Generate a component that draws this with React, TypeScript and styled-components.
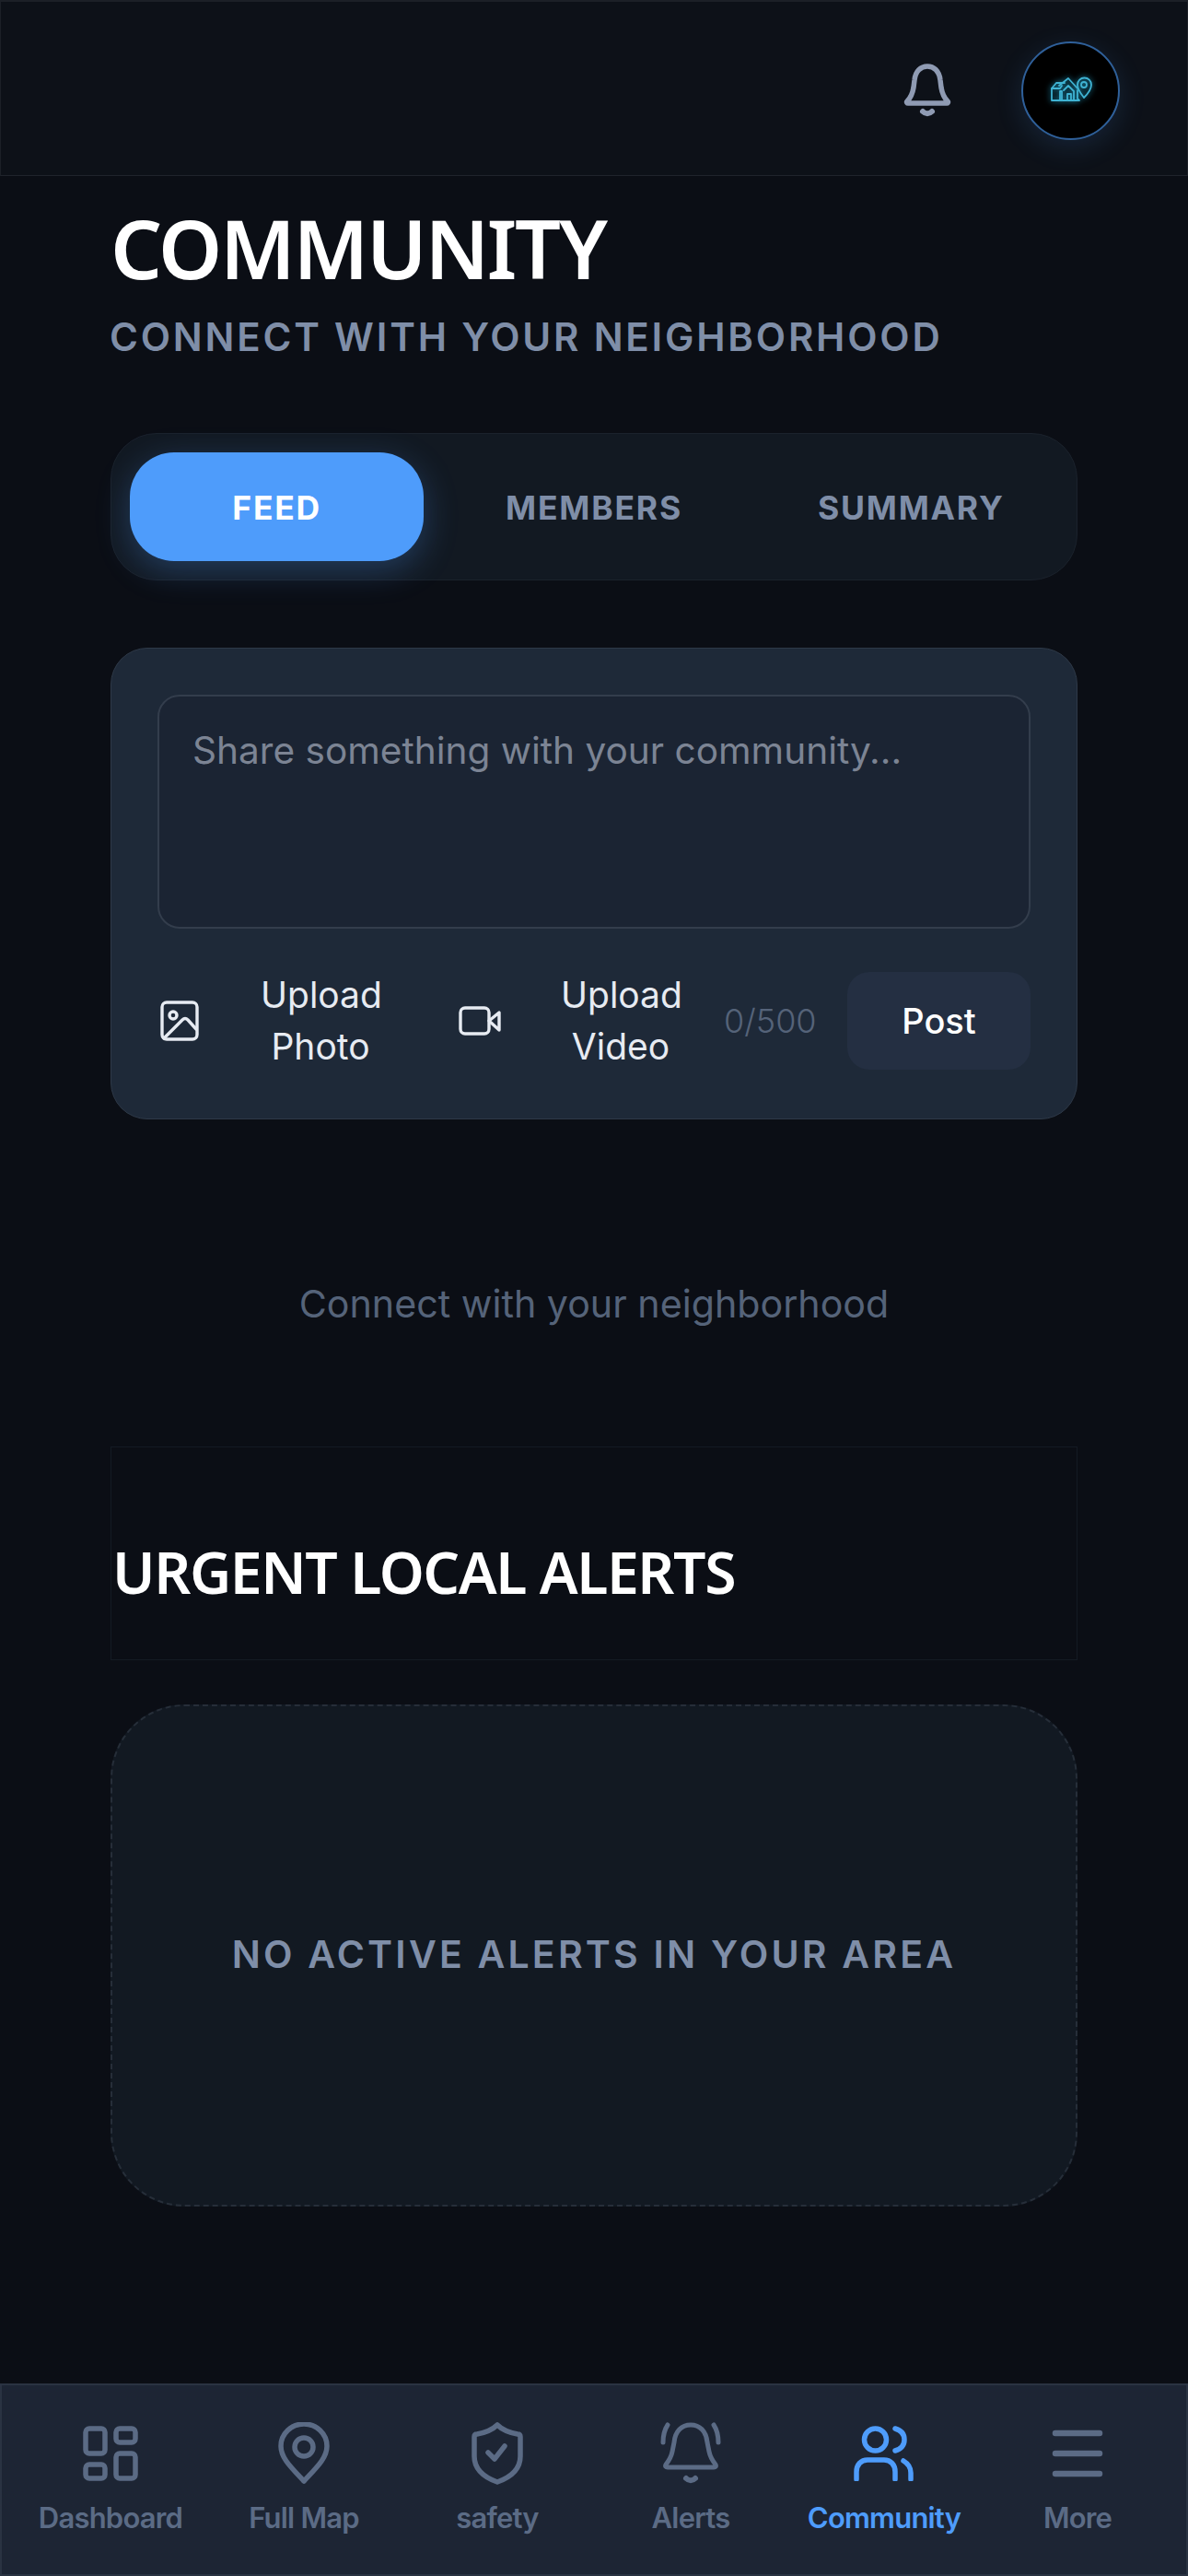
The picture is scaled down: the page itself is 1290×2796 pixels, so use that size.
import React from 'react'
import styled, { createGlobalStyle } from 'styled-components'

const GlobalStyle = createGlobalStyle`
  html, body { margin: 0; padding: 0; background: #0b0e15; }
  * { box-sizing: border-box; }
`

const Page = styled.div`
  width: 1290px;
  height: 2796px;
  display: flex;
  flex-direction: column;
  background: #0b0e15;
  font-family: Inter, "Noto Sans", sans-serif;
  overflow: hidden;
`

const Header = styled.header`
  height: 191px;
  flex-shrink: 0;
  display: flex;
  align-items: center;
  justify-content: flex-end;
  padding: 4px 73px 0 0;
  gap: 72px;
  background: #0d1118;
  border-top: 2px solid #1c2027;
  border-bottom: 1px solid #1f242c;
  border-left: 1px solid #1c2027;
  border-right: 1px solid #1c2027;
`

const BellButton = styled.div`
  width: 60px;
  height: 60px;
  display: flex;
  align-items: center;
  justify-content: center;
`

const Avatar = styled.div`
  width: 107px;
  height: 107px;
  border-radius: 50%;
  background: #000;
  border: 2px solid #2f609a;
  box-shadow: 0 8px 30px rgba(77, 156, 250, 0.14);
  display: flex;
  align-items: center;
  justify-content: center;
`

const Main = styled.main`
  flex: 1;
  padding: 0 120px;
  display: flex;
  flex-direction: column;
`

const Title = styled.h1`
  margin: 28px 0 0;
  font-family: "Noto Sans", sans-serif;
  font-size: 88px;
  line-height: 100px;
  font-weight: 600;
  letter-spacing: -2.3px;
  color: #fff;
`

const Subtitle = styled.div`
  margin-top: 19px;
  margin-left: -1px;
  font-size: 42px;
  line-height: 56px;
  font-weight: 600;
  letter-spacing: 2.8px;
  color: #7f8ea8;
  white-space: nowrap;
`

const Tabs = styled.div`
  margin-top: 76px;
  height: 160px;
  padding: 20px;
  display: grid;
  grid-template-columns: repeat(3, 1fr);
  gap: 25px;
  border-radius: 50px;
  background: #121922;
  border: 1px solid #1b222c;
`

const Tab = styled.div<{ $active?: boolean }>`
  display: flex;
  align-items: center;
  justify-content: center;
  padding-top: 2px;
  border-radius: 48px;
  font-size: 35.5px;
  font-weight: 700;
  letter-spacing: 1.8px;
  color: ${p => (p.$active ? '#fff' : '#7f8ea8')};
  background: ${p => (p.$active ? '#4e9cfb' : 'transparent')};
  box-shadow: ${p => (p.$active ? '0 10px 36px rgba(78, 156, 251, 0.28)' : 'none')};
`

const Composer = styled.section`
  margin-top: 73px;
  padding: 50px;
  border-radius: 40px;
  background: #1e2938;
  border: 1px solid #2e3948;
`

const PromptBox = styled.div`
  height: 254px;
  padding: 34px 36px;
  border-radius: 24px;
  background: #1b2433;
  border: 2px solid #333d4c;
  font-size: 40.6px;
  line-height: 50px;
  color: #7c8494;
`

const ComposerTools = styled.div`
  margin-top: 44px;
  display: grid;
  grid-template-columns: 326px 289px 1fr 199px;
  align-items: center;
`

const UploadButton = styled.div`
  display: flex;
  align-items: center;
`

const UploadIcon = styled.div`
  width: 48px;
  display: flex;
  justify-content: center;
`

const UploadLabel = styled.div`
  width: 130px;
  margin-left: 64px;
  text-align: center;
  font-size: 39px;
  line-height: 56px;
  color: #e7ebf2;
`

const Counter = styled.div`
  font-size: 36px;
  font-weight: 300;
  color: #556379;
`

const PostButton = styled.div`
  height: 106px;
  display: flex;
  align-items: center;
  justify-content: center;
  border-radius: 24px;
  background: #242f42;
  font-size: 38px;
  font-weight: 500;
  color: #fff;
`

const EmptyFeed = styled.div`
  margin-top: 170px;
  text-align: center;
  font-size: 41.2px;
  line-height: 60px;
  color: #556379;
`

const AlertsHeader = styled.div`
  margin-top: 125px;
  height: 232px;
  padding-left: 1px;
  display: flex;
  align-items: center;
  border: 1px solid #141a23;
`

const AlertsTitle = styled.h2`
  margin: 40px 0 0;
  font-family: "Noto Sans", sans-serif;
  font-size: 62.4px;
  line-height: 72px;
  font-weight: 600;
  letter-spacing: -1.4px;
  color: #fff;
`

const AlertsEmpty = styled.div`
  margin-top: 48px;
  height: 545px;
  display: flex;
  align-items: center;
  justify-content: center;
  padding-bottom: 3px;
  border-radius: 80px;
  background: #121922;
  border: 2px dashed #262e39;
  font-size: 41px;
  font-weight: 600;
  letter-spacing: 3.2px;
  color: #7f8ea8;
`

const BottomNav = styled.nav`
  height: 209px;
  flex-shrink: 0;
  padding: 40px 13px 0;
  display: grid;
  grid-template-columns: repeat(6, 1fr);
  background: #1d2534;
  border: 2px solid #2a3342;
`

const NavItem = styled.div<{ $active?: boolean }>`
  display: flex;
  flex-direction: column;
  align-items: center;
  gap: 16px;
  font-size: 31px;
  line-height: 40px;
  font-weight: 600;
  letter-spacing: -0.8px;
  color: ${p => (p.$active ? '#4e9cfb' : '#5b6b85')};
`

const NavIconBox = styled.div`
  height: 68px;
  display: flex;
  align-items: center;
  justify-content: center;
`

const BellIcon = () => (
  <svg width="54" height="58" viewBox="0 0 54 58" fill="none" stroke="#8f9bb3" strokeWidth="5.5" strokeLinecap="round" strokeLinejoin="round">
    <path d="M5 41c4-4 6-9 7-15l1-8C14 8 20 3 27 3s13 5 14 15l1 8c1 6 3 11 7 15 1 1 0 2-1 2H6c-1 0-2-1-1-2Z" />
    <path d="M22 52c3 3 7 3 10 0" strokeWidth="6" />
  </svg>
)

const BrandIcon = () => (
  <svg
    width="46"
    height="32"
    viewBox="0 0 46 32"
    fill="none"
    stroke="#3fb3d3"
    strokeWidth="1.8"
    strokeLinejoin="round"
    strokeLinecap="round"
    style={{ filter: 'drop-shadow(0 0 3px #1f9cc4)' }}
  >
    <path d="M2 14h9l2-3M2 14l5-6h9" />
    <path d="M2 14v13h30l-2-2v-9" />
    <path d="M10 11 20 3l10 11" />
    <path d="M13 27V17h-2v10M15 16l5-5 6 6v10h-3v-7h-4v7" />
    <path d="M38 28c-4-5-7-9-7-14a7.5 7.5 0 0 1 15 0c0 5-3 9-8 14Z" transform="translate(-1 -4)" />
    <circle cx="37" cy="10" r="3" />
  </svg>
)

const PhotoIcon = () => (
  <svg width="42" height="44" viewBox="0 0 42 44" fill="none" stroke="#e7ebf2" strokeWidth="3.4" strokeLinecap="round" strokeLinejoin="round">
    <rect x="2" y="2" width="38" height="40" rx="5" />
    <circle cx="14" cy="16" r="4" />
    <path d="M4 41 24 21c2-2 4-2 6 0l9 10" />
  </svg>
)

const VideoIcon = () => (
  <svg width="46" height="34" viewBox="0 0 46 34" fill="none" stroke="#e7ebf2" strokeWidth="3.4" strokeLinecap="round" strokeLinejoin="round">
    <rect x="2" y="3" width="31" height="28" rx="5" />
    <path d="M33 17 44 8v19Z" />
  </svg>
)

const DashboardIcon = () => (
  <svg width="60" height="60" viewBox="0 0 60 60" fill="none" stroke="currentColor" strokeWidth="5.5" strokeLinejoin="round">
    <rect x="3" y="3" width="21" height="27" rx="4" />
    <rect x="36" y="3" width="21" height="15" rx="4" />
    <rect x="36" y="30" width="21" height="27" rx="4" />
    <rect x="3" y="42" width="21" height="15" rx="4" />
  </svg>
)

const PinIcon = () => (
  <svg width="56" height="68" viewBox="0 0 56 68" fill="none" stroke="currentColor" strokeWidth="5.5" strokeLinejoin="round">
    <path d="M28 64C14 49 3 39 3 26a25 24 0 0 1 50 0c0 13-11 23-25 38Z" />
    <circle cx="28" cy="27" r="10" />
  </svg>
)

const ShieldIcon = () => (
  <svg width="56" height="68" viewBox="0 0 56 68" fill="none" stroke="currentColor" strokeWidth="5.5" strokeLinecap="round" strokeLinejoin="round">
    <path d="M28 3c5 5 11 8 22 10 2 0 3 1 3 3v21c0 14-11 23-25 28C14 60 3 51 3 37V16c0-2 1-3 3-3C17 11 23 8 28 3Z" />
    <path d="m18 33 7 7 11-14" />
  </svg>
)

const AlertBellIcon = () => (
  <svg width="66" height="68" viewBox="0 0 66 68" fill="none" stroke="currentColor" strokeWidth="5" strokeLinecap="round" strokeLinejoin="round">
    <path d="M3 22c0-7 1-13 5-19" />
    <path d="M63 22c0-7-1-13-5-19" />
    <path d="M6 46c4-5 6-9 7-14l2-10C16 10 23 3 33 3s17 7 18 19l2 10c1 5 3 9 7 14 1 2 0 3-2 3H8c-2 0-3-1-2-3Z" />
    <path d="M28 61c3 3 7 3 10 0" strokeWidth="6" />
  </svg>
)

const PeopleIcon = () => (
  <svg width="66" height="60" viewBox="0 0 66 60" fill="none" stroke="currentColor" strokeWidth="5.5" strokeLinecap="round" strokeLinejoin="round">
    <circle cx="23.5" cy="15" r="12" />
    <path d="M45 3c7 2 10 6 10 12s-3 10-10 12" />
    <path d="M3 58v-8c0-8 5-13 12-13h18c7 0 12 5 12 13v8" />
    <path d="M54 38c5 3 8 7 8 13v7" />
  </svg>
)

const MenuIcon = () => (
  <svg width="56" height="60" viewBox="0 0 56 60" fill="none" stroke="currentColor" strokeWidth="6.5" strokeLinecap="round">
    <path d="M4 8h48M4 30h48M4 52h48" />
  </svg>
)

const navItems = [
  { label: 'Dashboard', icon: <DashboardIcon /> },
  { label: 'Full Map', icon: <PinIcon /> },
  { label: 'safety', icon: <ShieldIcon /> },
  { label: 'Alerts', icon: <AlertBellIcon /> },
  { label: 'Community', icon: <PeopleIcon />, active: true },
  { label: 'More', icon: <MenuIcon /> },
]

const App = () => (
  <Page>
    <GlobalStyle />
    <Header>
      <BellButton>
        <BellIcon />
      </BellButton>
      <Avatar>
        <BrandIcon />
      </Avatar>
    </Header>
    <Main>
      <Title>COMMUNITY</Title>
      <Subtitle>CONNECT WITH YOUR NEIGHBORHOOD</Subtitle>
      <Tabs>
        <Tab $active>FEED</Tab>
        <Tab>MEMBERS</Tab>
        <Tab>SUMMARY</Tab>
      </Tabs>
      <Composer>
        <PromptBox>Share something with your community...</PromptBox>
        <ComposerTools>
          <UploadButton>
            <UploadIcon>
              <PhotoIcon />
            </UploadIcon>
            <UploadLabel>Upload Photo</UploadLabel>
          </UploadButton>
          <UploadButton>
            <UploadIcon>
              <VideoIcon />
            </UploadIcon>
            <UploadLabel>Upload Video</UploadLabel>
          </UploadButton>
          <Counter>0/500</Counter>
          <PostButton>Post</PostButton>
        </ComposerTools>
      </Composer>
      <EmptyFeed>Connect with your neighborhood</EmptyFeed>
      <AlertsHeader>
        <AlertsTitle>URGENT LOCAL ALERTS</AlertsTitle>
      </AlertsHeader>
      <AlertsEmpty>NO ACTIVE ALERTS IN YOUR AREA</AlertsEmpty>
    </Main>
    <BottomNav>
      {navItems.map(item => (
        <NavItem key={item.label} $active={item.active}>
          <NavIconBox>{item.icon}</NavIconBox>
          {item.label}
        </NavItem>
      ))}
    </BottomNav>
  </Page>
)

export default App
